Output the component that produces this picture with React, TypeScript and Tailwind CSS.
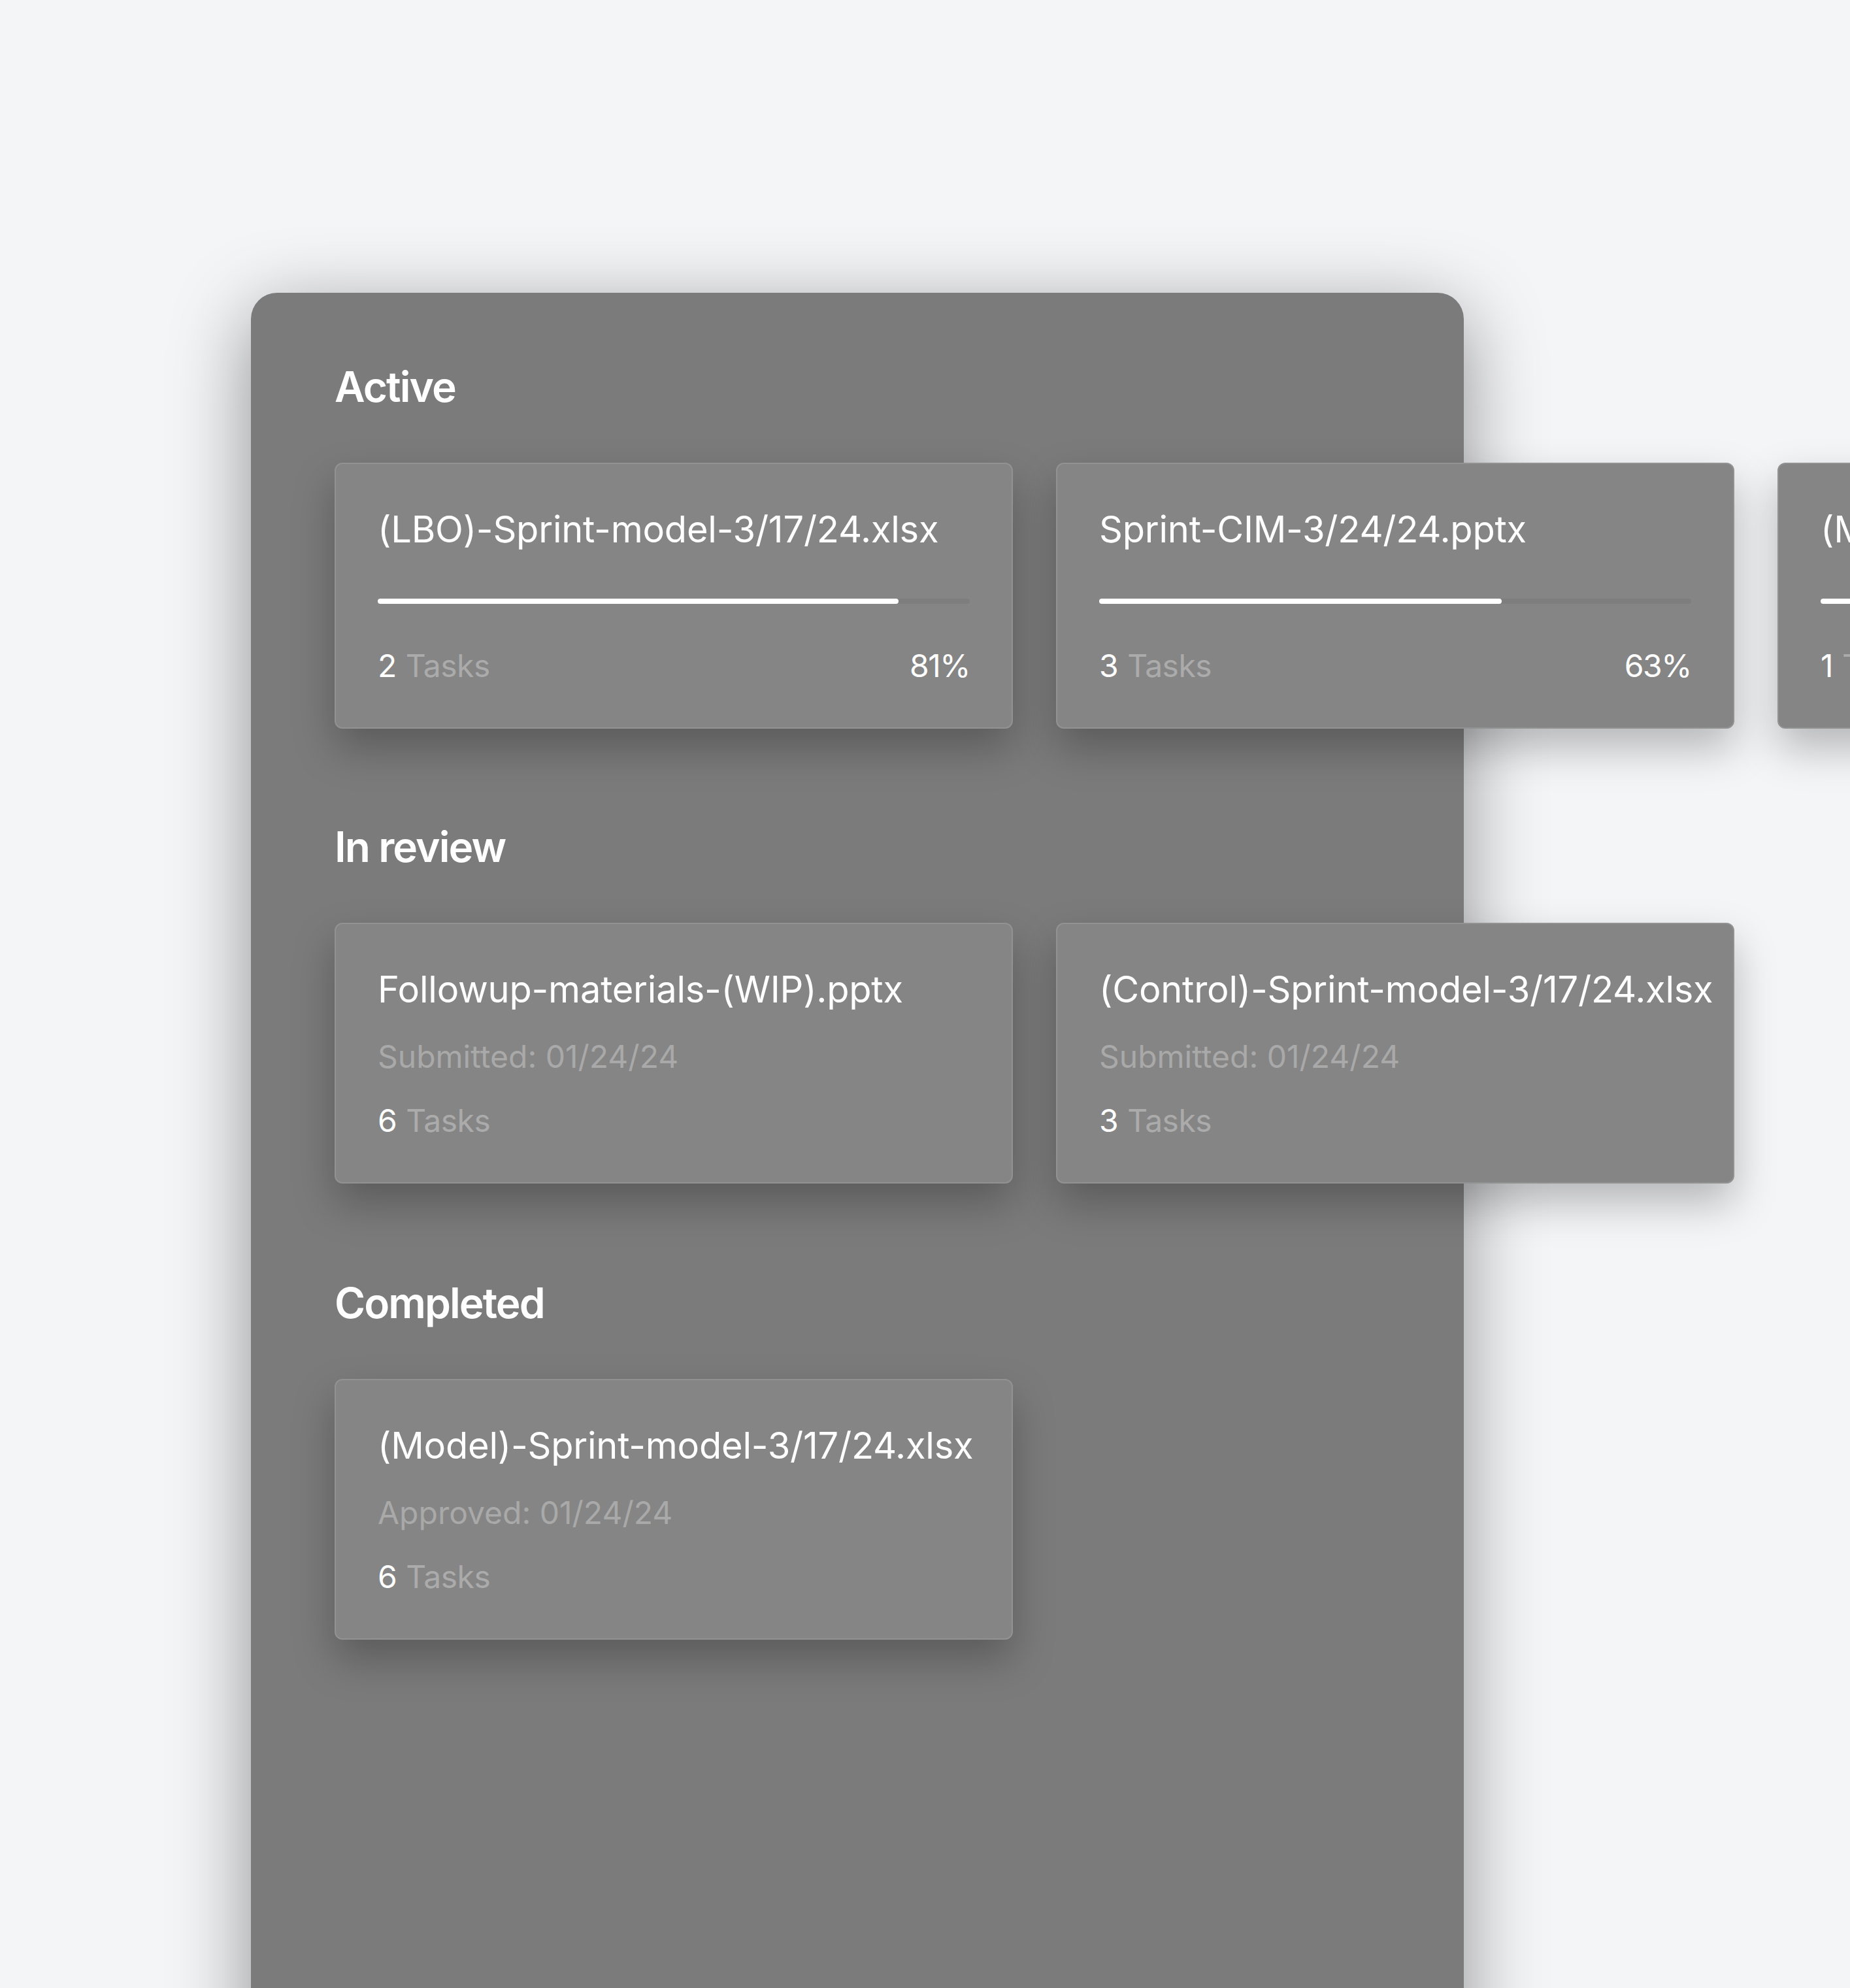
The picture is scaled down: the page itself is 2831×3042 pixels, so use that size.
const active = [
  { name: "(LBO)-Sprint-model-3/17/24.xlsx", tasks: 2, pct: 81, bar: 88 },
  { name: "Sprint-CIM-3/24/24.pptx", tasks: 3, pct: 63, bar: 68 },
  { name: "(Model)-Sprint-model-3/24/24.xlsx", tasks: 1, pct: 42, bar: 46 },
]

const inReview = [
  { name: "Followup-materials-(WIP).pptx", date: "Submitted: 01/24/24", tasks: 6 },
  { name: "(Control)-Sprint-model-3/17/24.xlsx", date: "Submitted: 01/24/24", tasks: 3 },
]

const completed = [{ name: "(Model)-Sprint-model-3/17/24.xlsx", date: "Approved: 01/24/24", tasks: 6 }]

function TaskCount({ n }: { n: number }) {
  return (
    <p className="text-[48px] leading-[60px] text-white">
      {n} <span className="tracking-[-0.01em] text-[#ababab]">Tasks</span>
    </p>
  )
}

function Card({ children }: { children: React.ReactNode }) {
  return (
    <div className="w-[1038px] shrink-0 rounded-[12px] border-2 border-[#929292] bg-[#858585] p-[64px] shadow-[0_30px_64px_rgba(0,0,0,0.26)]">
      {children}
    </div>
  )
}

function Heading({ children, className = "" }: { children: React.ReactNode; className?: string }) {
  return (
    <h2 className={`text-[64px] font-semibold leading-[96px] tracking-[-0.03em] text-white ${className}`}>{children}</h2>
  )
}

function FileCard({ name, date, tasks }: { name: string; date: string; tasks: number }) {
  return (
    <Card>
      <p className="whitespace-nowrap text-[56px] leading-[72px] tracking-[-0.004em] text-white">{name}</p>
      <p className="mt-[37px] text-[48px] leading-[60px] text-[#a9a9a9]">{date}</p>
      <div className="mt-[38px]">
        <TaskCount n={tasks} />
      </div>
    </Card>
  )
}

export default function App() {
  return (
    <div className="h-screen w-full overflow-hidden bg-[#f4f5f7] font-['Inter',sans-serif]">
      <div className="pl-[384px] pt-[448px]">
        <div className="h-[2700px] w-[1856px] rounded-t-[40px] bg-[#7b7b7b] px-[128px] pt-[96px] shadow-[0_30px_120px_rgba(0,0,0,0.42)]">
          {/* Active */}
          <Heading>Active</Heading>
          <div className="mt-[68px] flex gap-[66px]">
            {active.map((f) => (
              <Card key={f.name}>
                <p className="whitespace-nowrap text-[56px] leading-[72px] tracking-[-0.004em] text-white">{f.name}</p>
                <div className="mt-[70px] h-[8px] w-full rounded-full bg-black/5">
                  <div className="h-full rounded-full bg-white" style={{ width: `${f.bar}%` }} />
                </div>
                <div className="mt-[65px] flex items-center justify-between">
                  <TaskCount n={f.tasks} />
                  <p className="text-[48px] leading-[60px] tracking-[-0.03em] text-white">{f.pct}%</p>
                </div>
              </Card>
            ))}
          </div>

          {/* In review */}
          <Heading className="mt-[133px]">In review</Heading>
          <div className="mt-[68px] flex gap-[66px]">
            {inReview.map((f) => (
              <FileCard key={f.name} {...f} />
            ))}
          </div>

          {/* Completed */}
          <Heading className="mt-[135px]">Completed</Heading>
          <div className="mt-[68px] flex gap-[66px]">
            {completed.map((f) => (
              <FileCard key={f.name} {...f} />
            ))}
          </div>
        </div>
      </div>
    </div>
  )
}
